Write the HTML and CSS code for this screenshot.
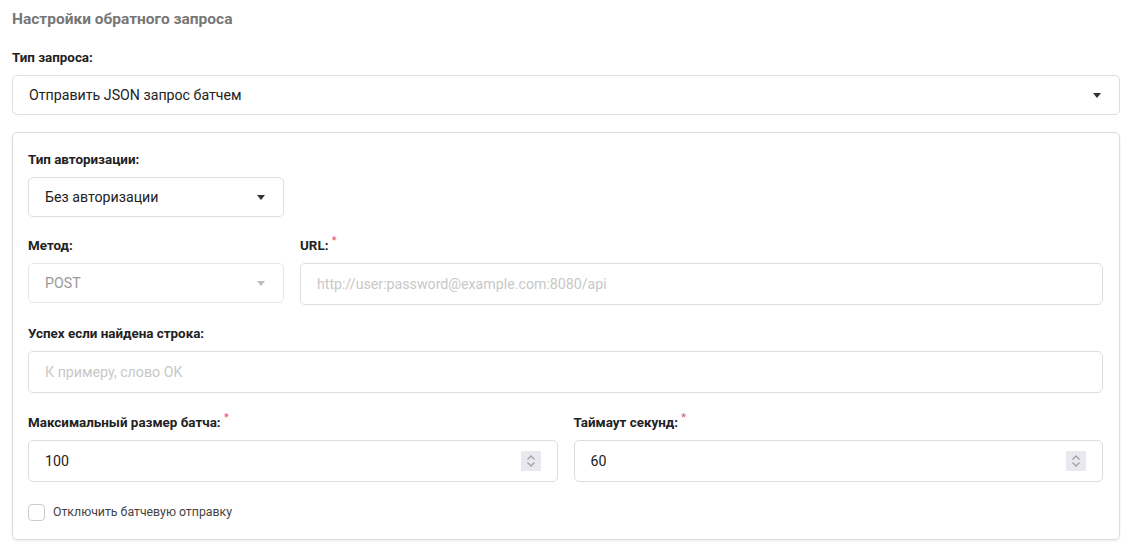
FILE: index.html
```html
<!DOCTYPE html>
<html lang="ru">
<head>
  <meta charset="UTF-8">
  <title>Настройки обратного запроса</title>
  <link rel="stylesheet" href="styles.css">
</head>
<body>
  <div class="section-title">Настройки обратного запроса</div>

  <div class="form-group top">
    <label class="field-label">Тип запроса:</label>
    <div class="select">
      <span>Отправить JSON запрос батчем</span>
      <span class="caret"></span>
    </div>
  </div>

  <div class="card">
    <div class="form-group">
      <label class="field-label">Тип авторизации:</label>
      <div class="select narrow">
        <span>Без авторизации</span>
        <span class="caret"></span>
      </div>
    </div>

    <div class="form-row method-row">
      <div class="form-group">
        <label class="field-label">Метод:</label>
        <div class="select disabled">
          <span>POST</span>
          <span class="caret"></span>
        </div>
      </div>
      <div class="form-group">
        <label class="field-label">URL: <sup class="req">*</sup></label>
        <div class="input placeholder">http://user:password@example.com:8080/api</div>
      </div>
    </div>

    <div class="form-group wide">
      <label class="field-label">Успех если найдена строка:</label>
      <div class="input placeholder">К примеру, слово OK</div>
    </div>

    <div class="form-row half-row">
      <div class="form-group wide">
        <label class="field-label">Максимальный размер батча: <sup class="req">*</sup></label>
        <div class="input number">
          <span>100</span>
          <span class="spinner">
            <svg width="12" height="16" viewBox="0 0 12 16"><path d="M2.5 6.5 L6 3 L9.5 6.5 M2.5 9.5 L6 13 L9.5 9.5" fill="none" stroke="#a0a0a8" stroke-width="1.3"/></svg>
          </span>
        </div>
      </div>
      <div class="form-group wide">
        <label class="field-label">Таймаут секунд: <sup class="req">*</sup></label>
        <div class="input number">
          <span>60</span>
          <span class="spinner">
            <svg width="12" height="16" viewBox="0 0 12 16"><path d="M2.5 6.5 L6 3 L9.5 6.5 M2.5 9.5 L6 13 L9.5 9.5" fill="none" stroke="#a0a0a8" stroke-width="1.3"/></svg>
          </span>
        </div>
      </div>
    </div>

    <label class="check">
      <span class="box"></span>
      <span>Отключить батчевую отправку</span>
    </label>
  </div>
</body>
</html>
```

FILE: styles.css
```css
* {
  box-sizing: border-box;
}

body {
  margin: 0;
  padding: 8px 12px;
  font-family: Roboto, 'Noto Sans', sans-serif;
  color: #222;
  background: #fff;
}

.section-title {
  font-size: 15.5px;
  line-height: 22px;
  font-weight: 700;
  color: #777;
  margin-bottom: 19px;
}

.field-label {
  display: block;
  font-size: 13.4px;
  line-height: 18px;
  font-weight: 700;
  color: #222;
  margin-bottom: 8px;
}

.req {
  color: #e0506a;
  font-size: 11px;
  font-weight: 400;
  vertical-align: top;
  position: relative;
  top: -5px;
}

.form-group {
  margin-bottom: 20px;
}

.form-group.wide {
  margin-bottom: 21px;
}

.form-group.top {
  margin-bottom: 17px;
}

.select,
.input {
  display: flex;
  align-items: center;
  justify-content: space-between;
  border: 1px solid #ddd;
  border-radius: 5px;
  padding: 0 16px;
  font-size: 14.2px;
  color: #222;
  background: #fff;
}

.select {
  height: 40px;
}

.input {
  height: 42px;
}

.select.narrow {
  width: 256px;
}

.select.disabled {
  color: #999;
  border-color: #e8e8e8;
}

.select.disabled .caret {
  border-top-color: #bbb;
}

.caret {
  width: 0;
  height: 0;
  border-left: 4.5px solid transparent;
  border-right: 4.5px solid transparent;
  border-top: 5px solid #333;
  margin-right: 2px;
}

.input.placeholder {
  color: #c8c8c8;
}

.spinner {
  width: 20px;
  height: 20px;
  background: #e8e8ee;
  display: flex;
  align-items: center;
  justify-content: center;
}

.card {
  border: 1px solid #ddd;
  border-radius: 5px;
  padding: 18px 16px 18px 15px;
  box-shadow: 0 1px 3px rgba(0,0,0,0.08);
}

.form-row {
  display: grid;
  gap: 16px;
}

.method-row {
  grid-template-columns: 256px 1fr;
}

.half-row {
  grid-template-columns: 1fr 1fr;
}

.form-row .form-group {
  min-width: 0;
}

.check {
  display: flex;
  align-items: center;
  gap: 8px;
  font-size: 12.3px;
  color: #444;
  height: 18px;
}

.check .box {
  width: 17px;
  height: 17px;
  border: 1px solid #ccc;
  border-radius: 4px;
}
```
